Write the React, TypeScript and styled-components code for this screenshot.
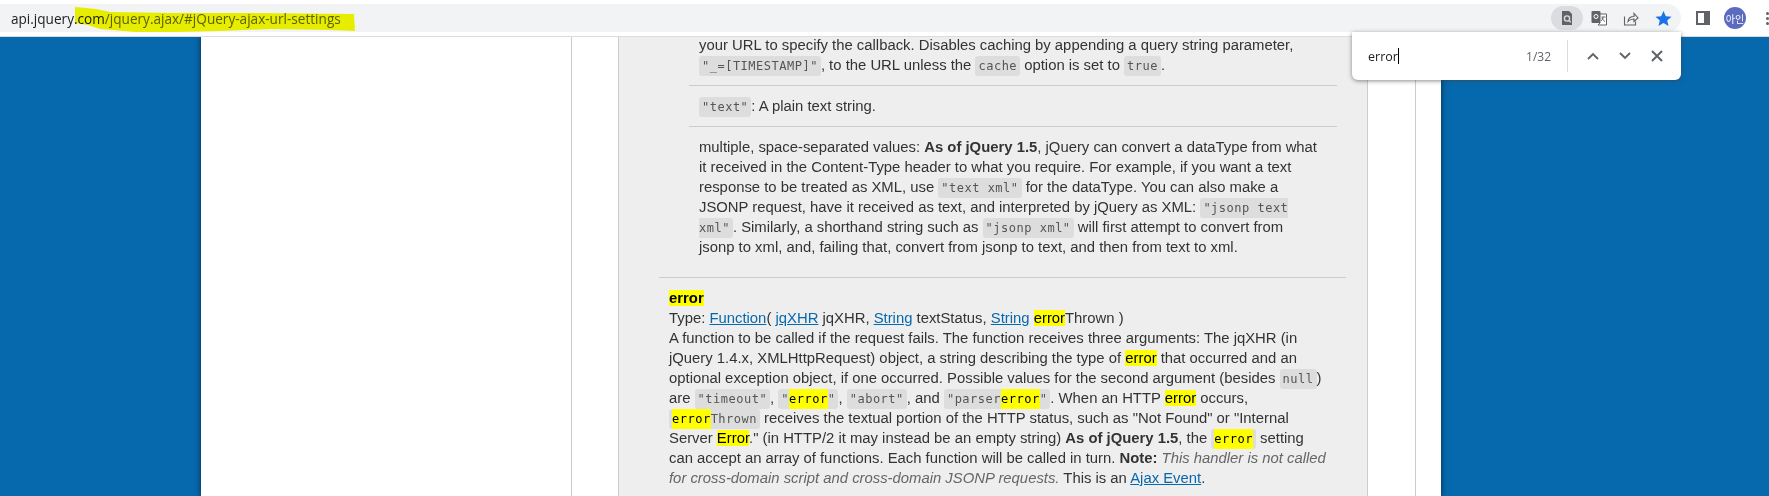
import { createGlobalStyle, styled } from "styled-components";

const GlobalStyle = createGlobalStyle`
  html, body {
    margin: 0;
    padding: 0;
    background: #fff;
    overflow: hidden;
  }
`;

const Page = styled.div`
  position: relative;
  width: 1769px;
  height: 496px;
  overflow: hidden;
  background: #fff;
`;

const Toolbar = styled.header`
  height: 36px;
  padding-top: 4px;
  box-sizing: border-box;
  display: flex;
  align-items: flex-start;
  background: #fff;
`;

const Omnibox = styled.div`
  width: 1681px;
  flex: none;
  height: 28px;
  display: flex;
  align-items: center;
  justify-content: space-between;
  background: #f1f3f4;
  border-radius: 0 14px 14px 0;
  padding-left: 11px;
  padding-right: 2px;
  box-sizing: border-box;
`;

const Url = styled.span`
  font-family: "Open Sans", sans-serif;
  font-size: 13.6px;
  color: #202124;
`;

const UrlTail = styled.span`
  color: #5f6368;
`;

const PillIcons = styled.div`
  display: flex;
  align-items: center;
`;

const PillButton = styled.div<{ $active?: boolean }>`
  width: 32px;
  height: 24px;
  display: flex;
  align-items: center;
  justify-content: center;
  border-radius: 12px;
  background: ${(p) => (p.$active ? "#dadce0" : "transparent")};
`;

const ToolbarRight = styled.div`
  flex: none;
  height: 28px;
  display: flex;
  align-items: center;
  padding-left: 15px;
  gap: 14px;
`;

const Avatar = styled.div`
  width: 22px;
  height: 22px;
  border-radius: 50%;
  background: #5c6bc0;
  color: #fff;
  font-family: "Noto Sans CJK KR", sans-serif;
  font-size: 10px;
  display: flex;
  align-items: center;
  justify-content: center;
`;

const Dots = styled.div`
  display: flex;
  flex-direction: column;
  gap: 2px;
  margin-left: 6px;
`;

const Dot = styled.i`
  display: block;
  width: 3px;
  height: 3px;
  background: #5f6368;
  border-radius: 50%;
`;

const Body = styled.div`
  height: 460px;
  border-top: 1px solid #dadce0;
  box-sizing: border-box;
  background: #0769ad;
  padding: 0 328px 0 201px;
  overflow: hidden;
`;

const Wrapper = styled.div`
  height: 100%;
  display: flex;
  background: #fff;
  box-shadow: 0 0 6px rgba(0, 0, 0, 0.65);
`;

const Sidebar = styled.aside`
  width: 370px;
  flex: none;
  border-right: 1px solid #ccc;
`;

const Content = styled.main`
  width: 750px;
  padding: 0 47px 0 46px;
  flex: none;
  border-right: 1px solid #ccc;
`;

const OptionBox = styled.section`
  height: 100%;
  width: 750px;
  border-left: 1px solid #ccc;
  border-right: 1px solid #ccc;
  box-sizing: border-box;
  background: #eee;
  padding-left: 40px;
  overflow: hidden;
  font-family: "Liberation Sans", Arial, sans-serif;
  font-size: 14.85px;
  line-height: 20px;
  color: #333;
  white-space: nowrap;
`;

const ValueList = styled.div`
  margin: -2px 0 0 30px;
  width: 648px;
`;

const Value = styled.div`
  padding: 0 10px 10px;
  margin-bottom: 10px;
  border-bottom: 1px solid #ccc;

  &:last-child {
    border-bottom: 0;
    margin-bottom: 0;
    padding-bottom: 0;
  }
`;

const Option = styled.div`
  box-sizing: border-box;
  margin-top: 20px;
  padding: 10px;
  width: 687px;
  border-top: 1px solid #ccc;
`;

const Code = styled.code`
  font-family: "DejaVu Sans Mono", monospace;
  font-size: 12px;
  line-height: 1;
  background: #ddd;
  color: #555;
  padding: 3px;
  border-radius: 3px;
  letter-spacing: 0.5px;

  mark {
    padding: 3px 0;
  }
`;

const Hit = styled.mark`
  background: #ff0;
  color: #000;
`;

const Term = styled.strong`
  color: #000;
`;

const Note = styled.em`
  color: #666;
`;

const Link = styled.a`
  color: #0769ad;
  text-decoration: underline;
`;

const Scribble = styled.svg`
  position: absolute;
  left: 70px;
  top: 4px;
  mix-blend-mode: multiply;
  pointer-events: none;
`;

const FindBar = styled.div`
  position: absolute;
  left: 1352px;
  top: 32px;
  width: 329px;
  height: 48px;
  background: #fff;
  border-radius: 0 0 6px 6px;
  box-shadow: 0 1px 4px rgba(60, 64, 67, 0.6);
  display: flex;
  align-items: center;
  box-sizing: border-box;
  padding: 0 8px 0 16px;
  font-family: "Open Sans", sans-serif;
`;

const FindInput = styled.div`
  flex: 1;
  font-size: 12.5px;
  color: #202124;
  display: flex;
  align-items: center;
`;

const Caret = styled.i`
  display: block;
  width: 1px;
  height: 16px;
  background: #000;
`;

const FindCount = styled.span`
  font-size: 12px;
  color: #5f6368;
  margin-right: 16px;
`;

const FindDivider = styled.div`
  width: 1px;
  height: 32px;
  background: #dadce0;
  margin-right: 9px;
`;

const FindButton = styled.div`
  width: 32px;
  height: 32px;
  display: flex;
  align-items: center;
  justify-content: center;
`;

const PageLens = () => (
  <svg width="16" height="16" viewBox="0 0 16 16">
    <path d="M3 1h7l3 3v11H3z" fill="#5f6368" />
    <circle cx="8" cy="8.500" r="2.600" fill="none" stroke="#dadce0" strokeWidth="1.400" />
    <path d="M10 10.500l1.800 1.800" stroke="#dadce0" strokeWidth="1.400" />
  </svg>
);

const Translate = () => (
  <svg width="16" height="16" viewBox="0 0 16 16">
    <rect x="0.500" y="1" width="9" height="12" rx="1" fill="#5f6368" />
    <path d="M9 4h6.500v11H7l2-2z" fill="#fff" stroke="#5f6368" />
    <circle cx="5" cy="6.500" r="2" fill="none" stroke="#fff" strokeWidth="1" />
    <path d="M10.500 7h4M12 7c0 2-1 3-2 4M11 8c.5 1.500 2 3 3 3.500" fill="none" stroke="#5f6368" />
  </svg>
);

const Share = () => (
  <svg width="16" height="16" viewBox="0 0 16 16" fill="none" stroke="#5f6368" strokeWidth="1.100">
    <path d="M1.500 6.500V15h11v-3.500" />
    <path d="M5 11.500c.3-3 2.500-5 6-5V3.500l4 4.500-4 3.500V9c-3 0-4.500.8-6 2.500z" />
  </svg>
);

const Star = () => (
  <svg width="17" height="17" viewBox="0 0 17 17">
    <path d="M8.500 1l2.300 5.200 5.700.6-4.300 3.700 1.300 5.500-5-2.900-5 2.900 1.300-5.500L.5 6.800l5.700-.6z" fill="#1a73e8" />
  </svg>
);

const SidePanel = () => (
  <svg width="14" height="14" viewBox="0 0 14 14">
    <path d="M0 0h14v14H0z" fill="#5f6368" />
    <path d="M2 2h6v10H2z" fill="#fff" />
  </svg>
);

const Chevron = ({ up }: { up?: boolean }) => (
  <svg width="12" height="8" viewBox="0 0 12 8" fill="none" stroke="#5f6368" strokeWidth="1.800">
    <path d={up ? "M1 7l5-5 5 5" : "M1 1l5 5 5-5"} />
  </svg>
);

const Close = () => (
  <svg width="12" height="12" viewBox="0 0 12 12" fill="none" stroke="#5f6368" strokeWidth="2">
    <path d="M1 1l10 10M11 1L1 11" />
  </svg>
);

export default function App() {
  return (
    <Page>
      <GlobalStyle />
      <Toolbar>
        <Omnibox>
          <Url>
            api.jquery.com<UrlTail>/jquery.ajax/#jQuery-ajax-url-settings</UrlTail>
          </Url>
          <PillIcons>
            <PillButton $active>
              <PageLens />
            </PillButton>
            <PillButton>
              <Translate />
            </PillButton>
            <PillButton>
              <Share />
            </PillButton>
            <PillButton>
              <Star />
            </PillButton>
          </PillIcons>
        </Omnibox>
        <ToolbarRight>
          <SidePanel />
          <Avatar>아인</Avatar>
          <Dots>
            <Dot />
            <Dot />
            <Dot />
          </Dots>
        </ToolbarRight>
      </Toolbar>
      <Body>
        <Wrapper>
          <Sidebar />
          <Content>
            <OptionBox>
              <ValueList>
                <Value>
                  your URL to specify the callback. Disables caching by appending a query string parameter,
                  <br />
                  <Code>"_=[TIMESTAMP]"</Code>, to the URL unless the <Code>cache</Code> option is set to{" "}
                  <Code>true</Code>.
                </Value>
                <Value>
                  <Code>"text"</Code>: A plain text string.
                </Value>
                <Value>
                  multiple, space-separated values: <strong>As of jQuery 1.5</strong>, jQuery can convert a dataType from
                  what
                  <br />
                  it received in the Content-Type header to what you require. For example, if you want a text
                  <br />
                  response to be treated as XML, use <Code>"text xml"</Code> for the dataType. You can also make a
                  <br />
                  JSONP request, have it received as text, and interpreted by jQuery as XML:{" "}
                  <Code>
                    "jsonp text{" "}
                    <br />
                    xml"
                  </Code>
                  . Similarly, a shorthand string such as <Code>"jsonp xml"</Code> will first attempt to convert from
                  <br />
                  jsonp to xml, and, failing that, convert from jsonp to text, and then from text to xml.
                </Value>
              </ValueList>
              <Option>
                <Term>
                  <Hit>error</Hit>
                </Term>
                <br />
                Type: <Link>Function</Link>( <Link>jqXHR</Link> jqXHR, <Link>String</Link> textStatus,{" "}
                <Link>String</Link> <Hit>error</Hit>Thrown )
                <br />
                A function to be called if the request fails. The function receives three arguments: The jqXHR (in
                <br />
                jQuery 1.4.x, XMLHttpRequest) object, a string describing the type of <Hit>error</Hit> that occurred and
                an
                <br />
                optional exception object, if one occurred. Possible values for the second argument (besides{" "}
                <Code>null</Code>)
                <br />
                are <Code>"timeout"</Code>, <Code>"<Hit>error</Hit>"</Code>, <Code>"abort"</Code>, and{" "}
                <Code>"parser<Hit>error</Hit>"</Code>. When an HTTP <Hit>error</Hit> occurs,
                <br />
                <Code><Hit>error</Hit>Thrown</Code> receives the textual portion of the HTTP status, such as "Not Found"
                or "Internal
                <br />
                Server <Hit>Error</Hit>." (in HTTP/2 it may instead be an empty string){" "}
                <strong>As of jQuery 1.5</strong>, the <Code><Hit>error</Hit></Code> setting
                <br />
                can accept an array of functions. Each function will be called in turn. <strong>Note:</strong>{" "}
                <Note>This handler is not called</Note>
                <br />
                <Note>for cross-domain script and cross-domain JSONP requests.</Note> This is an{" "}
                <Link>Ajax Event</Link>.
              </Option>
            </OptionBox>
          </Content>
        </Wrapper>
      </Body>
      <Scribble width="290" height="30" viewBox="0 0 290 30">
        <path
          d="M5 3L26 5L40 8L105 9L180 9L284 10L285 27L262 26L200 25L150 27L106 28L66 28L30 25L18 21L5 19Z"
          fill="#f5f900"
        />
      </Scribble>
      <FindBar>
        <FindInput>
          error
          <Caret />
        </FindInput>
        <FindCount>1/32</FindCount>
        <FindDivider />
        <FindButton>
          <Chevron up />
        </FindButton>
        <FindButton>
          <Chevron />
        </FindButton>
        <FindButton>
          <Close />
        </FindButton>
      </FindBar>
    </Page>
  );
}
